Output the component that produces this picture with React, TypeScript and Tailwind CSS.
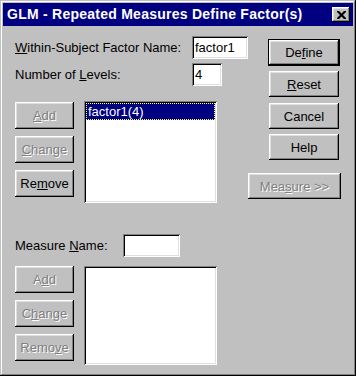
import React from 'react';
import clsx from 'clsx';

const raised =
  'shadow-[inset_-1px_-1px_0_#000,inset_1px_1px_0_#fff,inset_-2px_-2px_0_#808080,inset_2px_2px_0_#dfdfdf]';
const sunken =
  'shadow-[inset_1px_1px_0_#808080,inset_-1px_-1px_0_#fff,inset_2px_2px_0_#000,inset_-2px_-2px_0_#dfdfdf]';

function Btn({
  children,
  disabled,
  isDefault,
  className,
}: {
  children: React.ReactNode;
  disabled?: boolean;
  isDefault?: boolean;
  className?: string;
}) {
  const inner = (
    <div
      className={clsx(
        'flex flex-1 items-center justify-center bg-[#c0c0c0] leading-none',
        raised,
        disabled ? 'text-[#808080] [text-shadow:1px_1px_0_#fff]' : 'text-black',
      )}
    >
      <span>{children}</span>
    </div>
  );
  if (isDefault) {
    return <div className={clsx('flex border border-black', className)}>{inner}</div>;
  }
  return <div className={clsx('flex', className)}>{inner}</div>;
}

function TextBox({ value, className }: { value?: string; className?: string }) {
  return (
    <div className={clsx('flex items-center bg-white pl-[3px] leading-none text-black', sunken, className)}>
      {value}
    </div>
  );
}

export default function App() {
  return (
    <div className="h-[376px] w-[356px] bg-[#c0c0c0] font-['Liberation_Sans',Arial,sans-serif] text-[13px] text-black">
      {/* Window frame */}
      <div className="flex h-full w-full flex-col p-[3px] shadow-[inset_-1px_-1px_0_#000,inset_1px_1px_0_#c0c0c0,inset_-2px_-2px_0_#808080,inset_2px_2px_0_#fff]">
        {/* Title bar */}
        <div className="flex h-[23px] items-center bg-[#000080] pl-[4px] pr-[2px]">
          <span className="text-[14px] font-bold tracking-[0.25px] text-white">
            GLM - Repeated Measures Define Factor(s)
          </span>
          <div className={clsx('ml-auto mr-[1px] flex h-[15px] w-[18px] items-center justify-center bg-[#c0c0c0]', raised)}>
            <svg width="9" height="8" viewBox="0 0 9 8">
              <path d="M0 0h2l2.5 2.5L7 0h2v1L6 4l3 3v1H7L4.5 5.5 2 8H0V7l3-3L0 1z" fill="#000" />
            </svg>
          </div>
        </div>

        {/* Body */}
        <div className="flex flex-1 pl-[12px]">
          {/* Left column */}
          <div className="flex w-[233px] flex-col">
            <div className="mt-[10px] flex h-[23px] items-center">
              <span className="w-[177px]">
                <u>W</u>ithin-Subject Factor Name:
              </span>
              <TextBox value="factor1" className="h-[23px] w-[56px]" />
            </div>
            <div className="mt-[4px] flex h-[23px] items-center">
              <span className="w-[177px]">
                Number of <u>L</u>evels:
              </span>
              <TextBox value="4" className="h-[23px] w-[30px]" />
            </div>

            <div className="mt-[15px] flex">
              <div className="mt-[1px] flex w-[59px] flex-col gap-[7px]">
                <Btn disabled className="h-[27px]">
                  <u>A</u>dd
                </Btn>
                <Btn disabled className="h-[27px]">
                  <u>C</u>hange
                </Btn>
                <Btn className="h-[27px]">
                  Re<u>m</u>ove
                </Btn>
              </div>
              <div className={clsx('ml-[10px] h-[102px] w-[133px] bg-white p-[2px]', sunken)}>
                <div className="flex h-[17px] items-center border border-dotted border-[#ffff80] bg-[#000080] pl-[1px] leading-none text-white">
                  factor1(4)
                </div>
              </div>
            </div>

            <div className="mt-[31px] flex h-[23px] items-center">
              <span className="w-[108px]">
                Measure <u>N</u>ame:
              </span>
              <TextBox className="h-[23px] w-[57px]" />
            </div>

            <div className="mt-[9px] flex">
              <div className="flex w-[59px] flex-col gap-[7px]">
                <Btn disabled className="h-[27px]">
                  A<u>d</u>d
                </Btn>
                <Btn disabled className="h-[27px]">
                  C<u>h</u>ange
                </Btn>
                <Btn disabled className="h-[27px]">
                  Remo<u>v</u>e
                </Btn>
              </div>
              <div className={clsx('ml-[10px] h-[99px] w-[133px] bg-white', sunken)} />
            </div>
          </div>

          {/* Right column */}
          <div className="flex w-[94px] flex-col">
            <Btn isDefault className="ml-[20px] mt-[13px] h-[27px] w-[72px]">
              De<u>f</u>ine
            </Btn>
            <Btn className="ml-[21px] mt-[5px] h-[26px] w-[70px]">
              <u>R</u>eset
            </Btn>
            <Btn className="ml-[21px] mt-[6px] h-[26px] w-[70px]">Cancel</Btn>
            <Btn className="ml-[21px] mt-[5px] h-[26px] w-[70px]">Help</Btn>
            <Btn disabled className="mt-[13px] h-[26px] w-[93px]">
              Mea<u>s</u>ure &gt;&gt;
            </Btn>
          </div>
        </div>
      </div>
    </div>
  );
}
